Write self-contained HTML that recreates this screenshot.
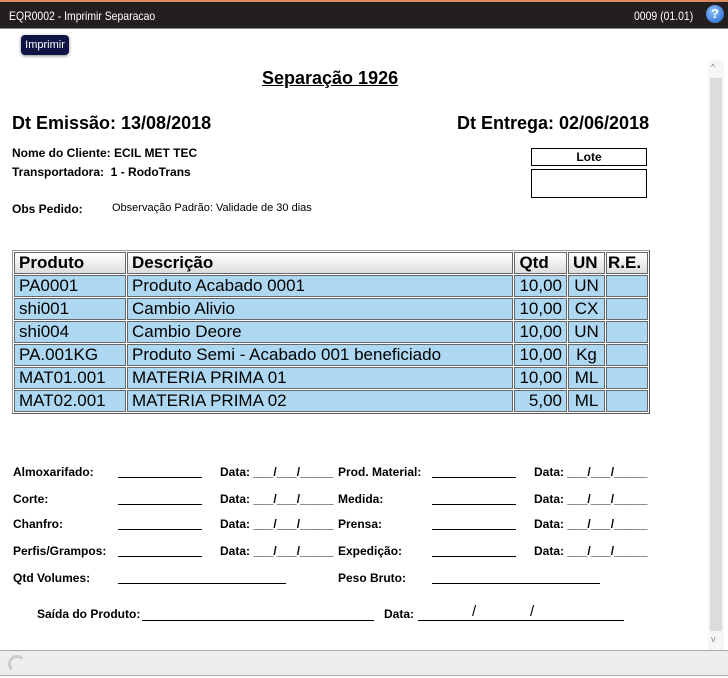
<!DOCTYPE html>
<html><head><meta charset="utf-8"><style>
*{margin:0;padding:0;box-sizing:border-box}
body{width:728px;height:678px;position:relative;overflow:hidden;background:#fff;font-family:"Liberation Sans",Arial,sans-serif;color:#000}
.a{position:absolute;white-space:nowrap}
.s{font-size:12px;font-weight:bold}
.ln{position:absolute;border-top:1px solid #000;height:0}
table{position:absolute;left:12px;top:250px;width:638px;border-collapse:separate;border-spacing:1px;border:1px solid #999;border-right-color:#555;border-bottom-color:#555;background:#fff;font-size:17px}
td,th{border:1px solid #666;padding:0 4px;height:22px;line-height:20px;text-align:left;white-space:nowrap}
th{background:linear-gradient(#fff,#ddd);font-weight:bold;font-size:17px}
td{background:#aed8f1}
.r{text-align:right}.c{text-align:center}
</style></head><body>
<div class="a" style="left:0;top:0;width:728px;height:2px;background:#d98a5e"></div>
<div class="a" style="left:0;top:2px;width:728px;height:27px;background:#231f1e;border-bottom:1px solid #888"></div>
<div class="a" style="left:9px;top:9px;color:#fff;font-size:12px;transform:scaleX(.87);transform-origin:left top">EQR0002 - Imprimir Separacao</div>
<div class="a" style="left:634px;top:9px;color:#fff;font-size:12px;transform:scaleX(.87);transform-origin:left top">0009 (01.01)</div>
<div class="a" style="left:706px;top:5px;width:18px;height:18px;border-radius:50%;background:radial-gradient(circle at 40% 35%,#8fc2ff,#1a5fc8);color:#fff;font-weight:bold;font-size:13px;text-align:center;line-height:18px">?</div>
<div class="a" style="left:21px;top:35px;width:48px;height:20px;border-radius:4px;background:#0f1445;color:#fff;font-size:11px;line-height:20px;text-align:center;box-shadow:0 1px 3px #888">Imprimir</div>

<div class="a" style="left:708px;top:60px;width:16px;height:590px;background:#f6f6f6"></div>
<div class="a" style="left:710px;top:78px;width:12px;height:553px;background:#dcdcdc"></div>
<div class="a" style="left:711px;top:62px;font-size:9px;color:#888">^</div>
<div class="a" style="left:711px;top:634px;font-size:9px;color:#888">v</div>

<div class="a" style="left:262px;top:68px;font-size:18px;font-weight:bold;text-decoration:underline">Separação 1926</div>
<div class="a" style="left:12px;top:113px;font-size:18px;font-weight:bold">Dt Emissão: 13/08/2018</div>
<div class="a" style="left:457px;top:113px;font-size:18px;font-weight:bold">Dt Entrega: 02/06/2018</div>
<div class="a s" style="left:12px;top:146px">Nome do Cliente: ECIL MET TEC</div>
<div class="a s" style="left:12px;top:165px">Transportadora:&nbsp; 1 - RodoTrans</div>
<div class="a s" style="left:12px;top:202px">Obs Pedido:</div>
<div class="a" style="left:112px;top:202px;font-size:11px">Observação Padrão: Validade de 30 dias</div>
<div class="a" style="left:531px;top:148px;width:116px;height:18px;border:1px solid #000;text-align:center;font-size:12px;font-weight:bold;line-height:16px">Lote</div>
<div class="a" style="left:531px;top:169px;width:116px;height:29px;border:1px solid #000"></div>

<table>
<tr><th style="width:112px">Produto</th><th>Descrição</th><th style="width:48px">Qtd</th><th style="width:37px">UN</th><th style="width:42px;padding:0 1px">R.E.</th></tr>
<tr><td>PA0001</td><td>Produto Acabado 0001</td><td class="r">10,00</td><td class="c">UN</td><td></td></tr>
<tr><td>shi001</td><td>Cambio Alivio</td><td class="r">10,00</td><td class="c">CX</td><td></td></tr>
<tr><td>shi004</td><td>Cambio Deore</td><td class="r">10,00</td><td class="c">UN</td><td></td></tr>
<tr><td>PA.001KG</td><td>Produto Semi - Acabado 001 beneficiado</td><td class="r">10,00</td><td class="c">Kg</td><td></td></tr>
<tr><td>MAT01.001</td><td>MATERIA PRIMA 01</td><td class="r">10,00</td><td class="c">ML</td><td></td></tr>
<tr><td>MAT02.001</td><td>MATERIA PRIMA 02</td><td class="r">5,00</td><td class="c">ML</td><td></td></tr>
</table>

<div class="a s" style="left:13px;top:465px">Almoxarifado:</div>
<div class="a s" style="left:13px;top:492px">Corte:</div>
<div class="a s" style="left:13px;top:517px">Chanfro:</div>
<div class="a s" style="left:13px;top:544px">Perfis/Grampos:</div>
<div class="a s" style="left:13px;top:571px">Qtd Volumes:</div>
<div class="a s" style="left:338px;top:465px">Prod. Material:</div>
<div class="a s" style="left:338px;top:492px">Medida:</div>
<div class="a s" style="left:338px;top:517px">Prensa:</div>
<div class="a s" style="left:338px;top:544px">Expedição:</div>
<div class="a s" style="left:338px;top:571px">Peso Bruto:</div>

<div class="ln" style="left:118px;top:477px;width:84px"></div>
<div class="ln" style="left:118px;top:504px;width:84px"></div>
<div class="ln" style="left:118px;top:529px;width:84px"></div>
<div class="ln" style="left:118px;top:556px;width:84px"></div>
<div class="ln" style="left:118px;top:583px;width:168px"></div>
<div class="ln" style="left:432px;top:477px;width:84px"></div>
<div class="ln" style="left:432px;top:504px;width:84px"></div>
<div class="ln" style="left:432px;top:529px;width:84px"></div>
<div class="ln" style="left:432px;top:556px;width:84px"></div>
<div class="ln" style="left:432px;top:583px;width:168px"></div>

<div class="a s" style="left:220px;top:465px">Data: ___/___/_____</div>
<div class="a s" style="left:220px;top:492px">Data: ___/___/_____</div>
<div class="a s" style="left:220px;top:517px">Data: ___/___/_____</div>
<div class="a s" style="left:220px;top:544px">Data: ___/___/_____</div>
<div class="a s" style="left:534px;top:465px">Data: ___/___/_____</div>
<div class="a s" style="left:534px;top:492px">Data: ___/___/_____</div>
<div class="a s" style="left:534px;top:517px">Data: ___/___/_____</div>
<div class="a s" style="left:534px;top:544px">Data: ___/___/_____</div>

<div class="a s" style="left:37px;top:607px">Saída do Produto:</div>
<div class="ln" style="left:142px;top:620px;width:232px"></div>
<div class="a s" style="left:384px;top:607px">Data:</div>
<div class="ln" style="left:418px;top:620px;width:206px"></div>
<div class="a" style="left:472px;top:603px;font-size:15px">/</div>
<div class="a" style="left:530px;top:603px;font-size:15px">/</div>

<div class="a" style="left:0;top:650px;width:728px;height:26px;background:#eee;border-top:1px solid #aaa;border-bottom:1px solid #aaa"></div>
<div class="a" style="left:8px;top:655px;width:18px;height:18px;border-radius:50%;border:3px solid #ccc;border-right-color:transparent;border-bottom-color:transparent"></div>
</body></html>
